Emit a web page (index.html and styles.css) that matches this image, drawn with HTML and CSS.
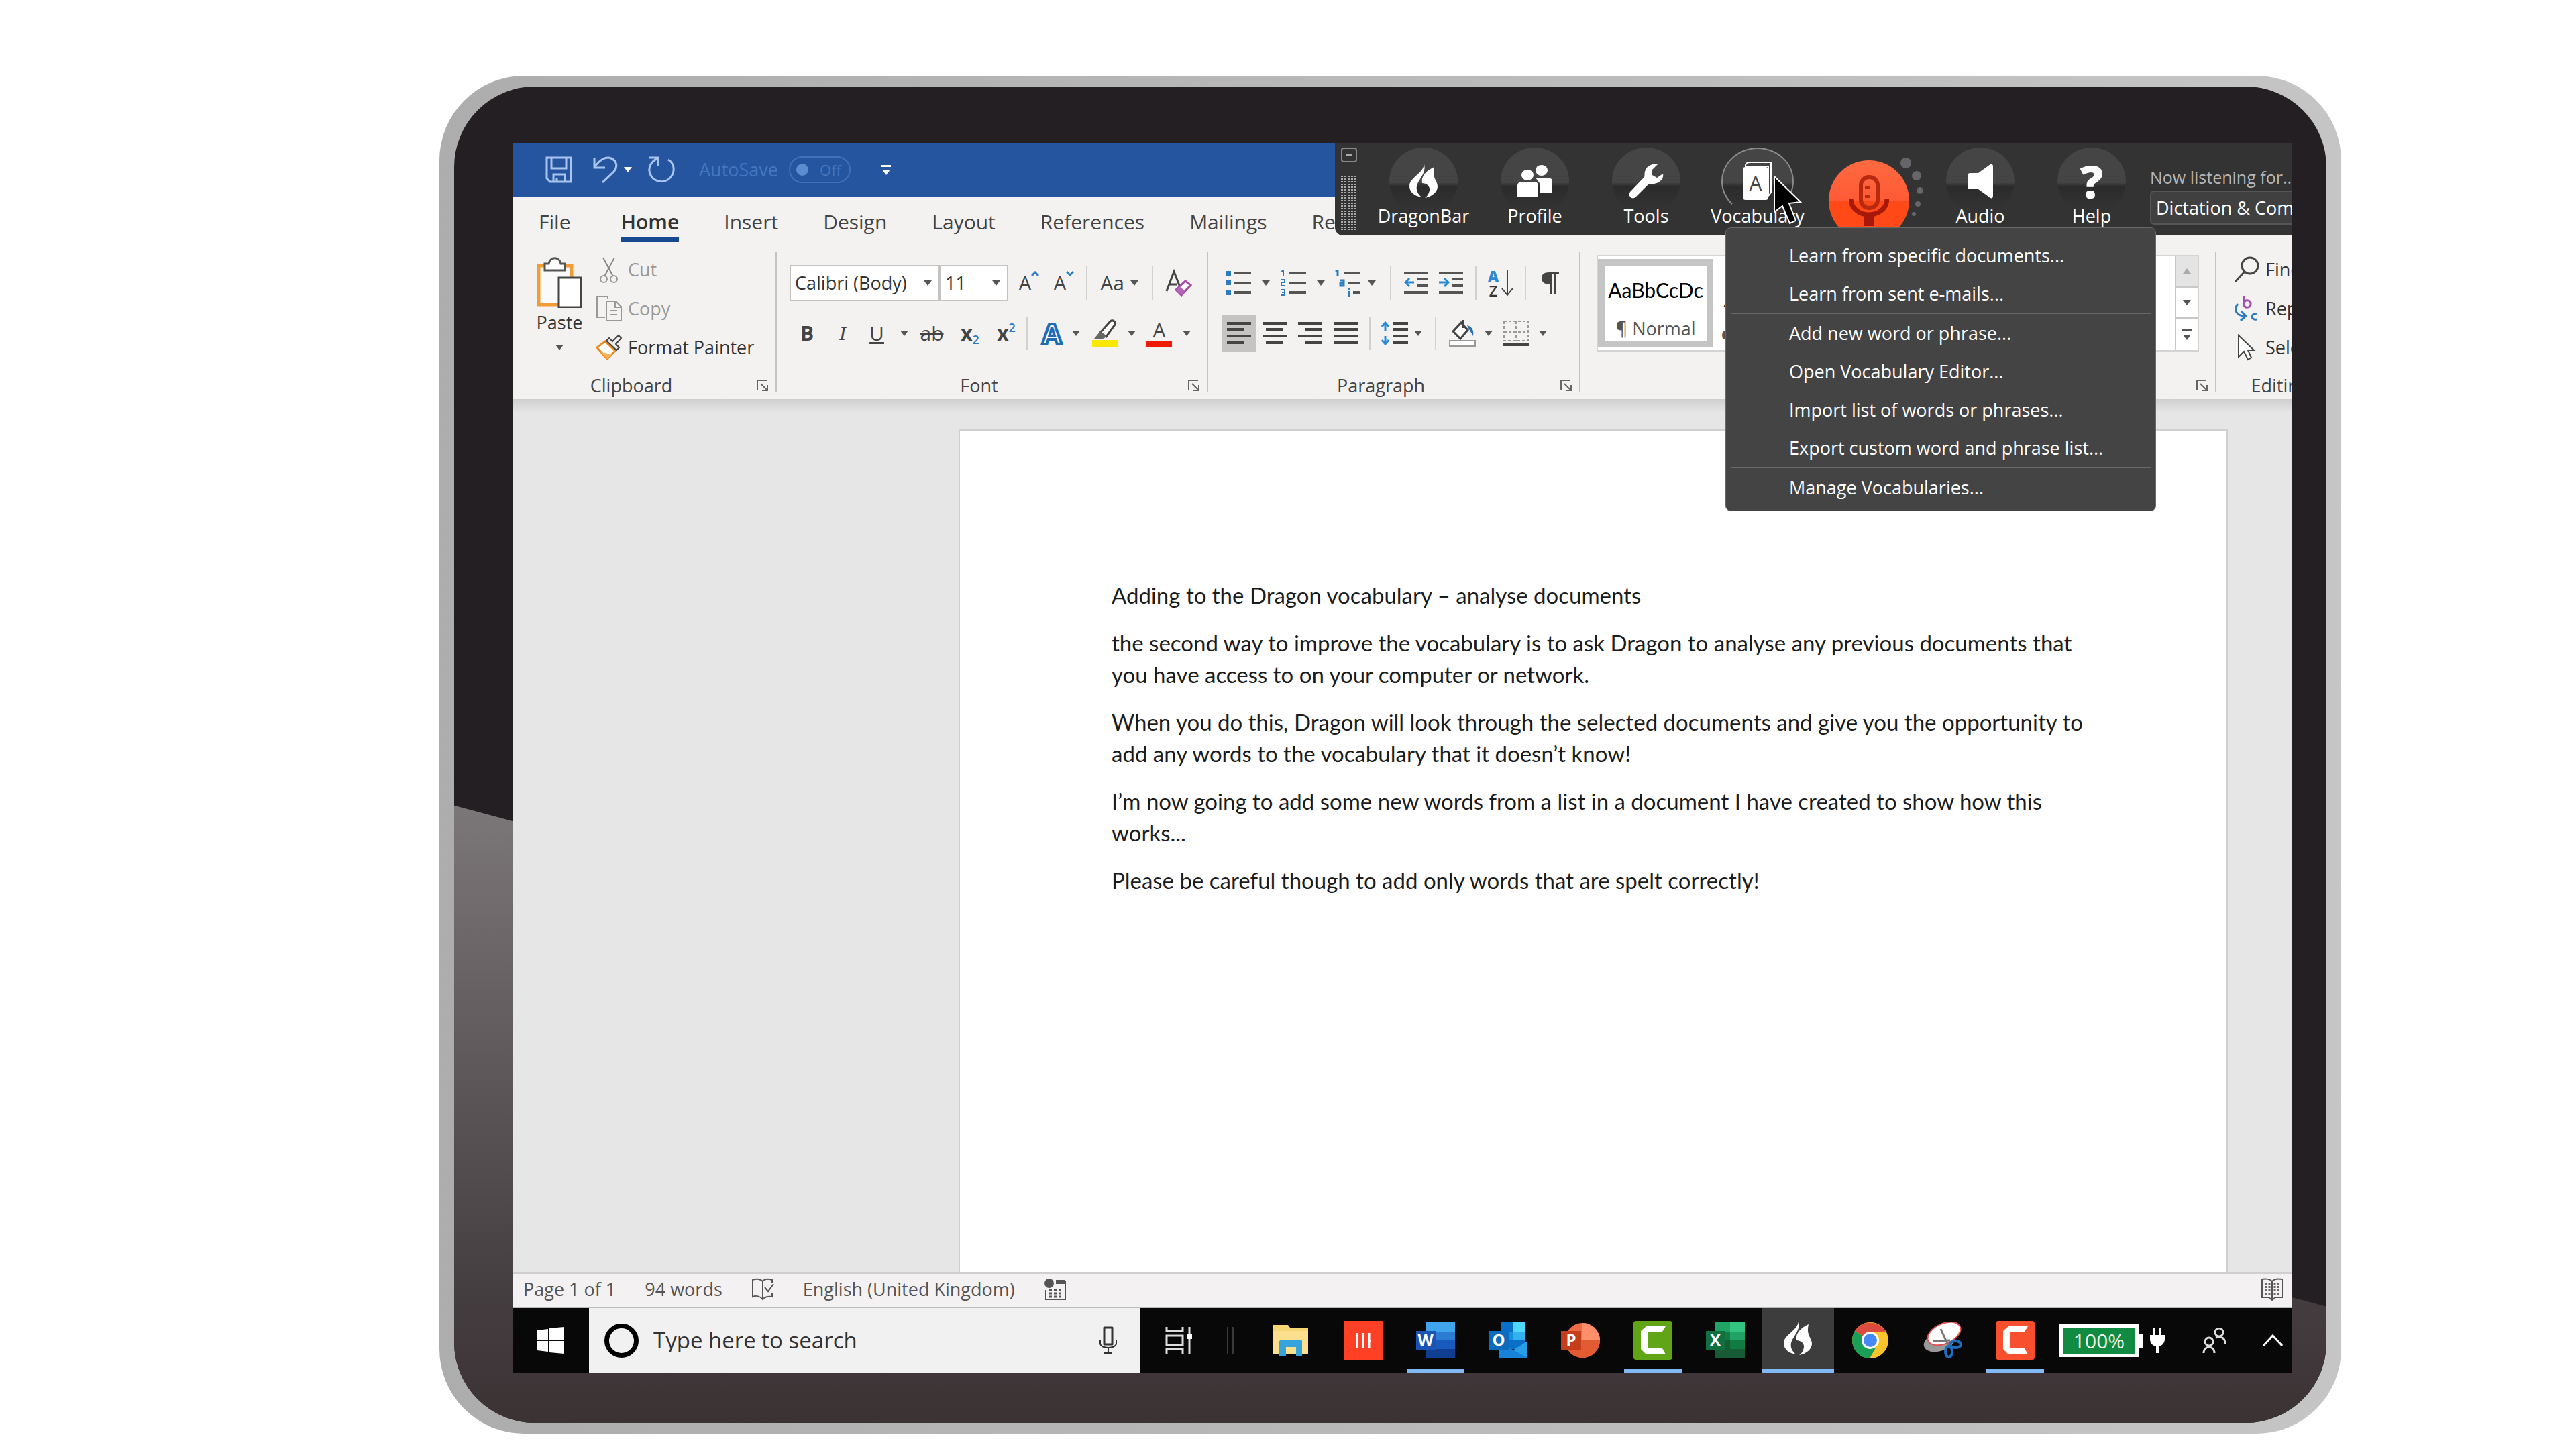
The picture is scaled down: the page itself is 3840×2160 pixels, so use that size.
FILE: index.html
```html
<!DOCTYPE html>
<html lang="en">
<head>
  <meta charset="UTF-8">
  <meta name="viewport" content="width=device-width, initial-scale=1.0">
  <title>Adding to the Dragon vocabulary</title>
  <link rel="stylesheet" href="styles.css">
</head>
<body>
  <svg class="sprite" width="0" height="0" aria-hidden="true">
    <symbol id="launcher" viewBox="0 0 18 18"><path d="M1 15V1H15M6 6L15 15M16 8V16H8" fill="none" stroke="#666" stroke-width="2"/></symbol>
    <symbol id="flame" viewBox="0 0 42 50"><path d="M22 0C20 14 0 20 0 32C0 42 8 47 18 49C11 43 9 36 12 29C16 20 25 12 22 0Z"/><path d="M37 4C26 9 17 17 19 28C26 28 31 33 30 39C29 44 26 48 23 50C34 48 42 41 42 33C42 24 33 21 37 4Z"/></symbol>
  </svg>

  <div class="tablet">
    <div class="bezel">
      <div class="screen">

        <!-- quick access bar -->
        <header class="titlebar">
          <button aria-label="Save"><svg width="40" height="40" viewBox="0 0 40 40"><path d="M2 2H38V38H7L2 33ZM9 2V18H31V2M12 38V27H29V38M17 38V33" /></svg></button>
          <button class="undo" aria-label="Undo"><svg width="38" height="40" viewBox="0 0 38 40"><path d="M2 2V17H18M2 17C10 4 20 0 27 3C36 7 37 16 31 23L14 39"/></svg><i class="caret white"></i></button>
          <button class="redo" aria-label="Redo"><svg width="40" height="40" viewBox="0 0 40 40"><path d="M2 2H15V15M15 3C3 8 0 18 3 26C8 41 30 42 37 26C40 17 37 9 30 5"/></svg></button>
          <label class="autosave">AutoSave
            <span class="toggle"><input type="checkbox">Off</span>
          </label>
          <button class="more" aria-label="Customise toolbar"><i class="bar"></i><i class="caret white"></i></button>
        </header>

        <section class="ribbon">
          <nav class="tabs">
            <a href="#" class="file">File</a>
            <a href="#" class="active">Home</a>
            <a href="#">Insert</a>
            <a href="#">Design</a>
            <a href="#">Layout</a>
            <a href="#">References</a>
            <a href="#">Mailings</a>
            <a href="#">Review</a>
          </nav>

          <div class="groups">
            <div class="group clipboard">
              <div class="clip-body">
                <button class="paste">
                  <svg width="68" height="76" viewBox="0 0 68 76"><path d="M3 13H52V71H3Z" fill="#fafafa" stroke="#f29c38" stroke-width="5"/><path d="M12 20V10H18C20 -1 34 -1 36 10H42V20Z" fill="#fff" stroke="#555" stroke-width="3"/><path d="M33 31H66V75H33Z" fill="#fff" stroke="#444" stroke-width="3"/></svg>
                  Paste
                  <i class="caret"></i>
                </button>
                <div class="clip-list">
                  <button class="off"><svg width="40" height="40" viewBox="0 0 40 40"><path d="M11 2L26 30M28 2L13 30" fill="none" stroke="#888" stroke-width="2"/><g fill="none" stroke="#999" stroke-width="2"><circle cx="12" cy="34" r="5"/><circle cx="27" cy="34" r="5"/></g></svg>Cut</button>
                  <button class="off"><svg width="40" height="40" viewBox="0 0 40 40"><path d="M14 33H2V2H18V6M16 9H30L38 17V38H16ZM29 9V18H38M21 23H32M21 29H32" fill="none" stroke="#999" stroke-width="2"/></svg>Copy</button>
                  <button><svg width="40" height="40" viewBox="0 0 40 40"><path d="M2 20L14 11L29 25L17 37Z" fill="#fff" stroke="#f08a24" stroke-width="3"/><path d="M8 27L17 37L24 30Z" fill="#fbb45c"/><path d="M16 10L20 6L25 11L34 2L38 6L30 15L35 20L31 24Z" fill="#eee" stroke="#444" stroke-width="2"/></svg>Format Painter</button>
                </div>
              </div>
              <footer><span>Clipboard</span><svg width="18" height="18"><use href="#launcher"/></svg></footer>
            </div>

            <div class="group font">
              <div class="tools font-top">
                <div class="pick"><select aria-label="Font"><option>Calibri (Body)</option></select><i class="caret"></i></div>
                <div class="pick"><select aria-label="Font size"><option>11</option></select><i class="caret"></i></div>
                <button class="glyph grow" aria-label="Grow font">A<svg width="12" height="8" viewBox="0 0 12 8"><path d="M1 7L6 2L11 7" fill="none" stroke="#2d7cc4" stroke-width="3"/></svg></button>
                <button class="glyph grow" aria-label="Shrink font">A<svg width="12" height="8" viewBox="0 0 12 8"><path d="M1 1L6 6L11 1" fill="none" stroke="#2d7cc4" stroke-width="3"/></svg></button>
                <i class="rule"></i>
                <button class="glyph">Aa</button>
                <i class="caret"></i>
                <i class="rule"></i>
                <button aria-label="Clear formatting"><svg width="40" height="42" viewBox="0 0 40 42"><path d="M2 33L13 4L22 27M6 23H18" fill="none" stroke="#444" stroke-width="3"/><path d="M16 31L30 18L38 24L24 39Z" fill="#fff" stroke="#a349a4" stroke-width="3"/><path d="M16 31L21 26L30 33L24 39Z" fill="#b565b6"/></svg></button>
              </div>
              <div class="tools font-low">
                <button class="glyph"><b>B</b></button>
                <button class="glyph serif"><em>I</em></button>
                <button class="glyph"><u>U</u></button>
                <i class="caret"></i>
                <button class="glyph"><s>ab</s></button>
                <button class="glyph"><b>x</b><sub>2</sub></button>
                <button class="glyph"><b>x</b><sup>2</sup></button>
                <i class="rule"></i>
                <button class="glyph outline">A</button>
                <i class="caret"></i>
                <button aria-label="Highlight"><svg width="40" height="42" viewBox="0 0 40 42"><path d="M13 20L28 3C32 0 37 4 35 8L22 26Z" fill="#fff" stroke="#444" stroke-width="3"/><path d="M13 18L23 26L17 29H4Z" fill="#666"/><path d="M1 31H39V42H1Z" fill="#fbe800"/></svg></button>
                <i class="caret"></i>
                <button class="glyph fontcolor">A</button>
                <i class="caret"></i>
              </div>
              <footer><span>Font</span><svg width="18" height="18"><use href="#launcher"/></svg></footer>
            </div>

            <div class="group para">
              <div class="tools para-top">
                <button aria-label="Bullets"><svg width="38" height="40" viewBox="0 0 38 40"><path d="M0 2H8V9H0ZM0 16H8V23H0ZM0 31H8V38H0Z" fill="#2b7cc0"/><path d="M13 5H38M13 20H38M13 34H38" stroke="#555" stroke-width="4"/></svg></button>
                <i class="caret"></i>
                <button aria-label="Numbering"><svg width="38" height="40" viewBox="0 0 38 40"><path d="M1 3L4 1V9M1 15H6V19H1V24H7M1 30H6V38H1M2 34H6" fill="none" stroke="#2b7cc0" stroke-width="2"/><path d="M13 5H38M13 20H38M13 34H38" stroke="#555" stroke-width="4"/></svg></button>
                <i class="caret"></i>
                <button aria-label="Multilevel list"><svg width="38" height="40" viewBox="0 0 38 40"><path d="M1 3L4 1V9M8 16H13V24H8V20H13M21 28V30M21 32V40" fill="none" stroke="#2b7cc0" stroke-width="3"/><path d="M13 5H38M20 20H38M27 34H38" stroke="#555" stroke-width="4"/></svg></button>
                <i class="caret"></i>
                <i class="rule"></i>
                <button aria-label="Decrease indent"><svg width="36" height="36" viewBox="0 0 36 36"><path d="M0 3H36M20 12H36M20 22H36M0 32H36" stroke="#555" stroke-width="4"/><path d="M1 17H15M8 11L2 17L8 23" fill="none" stroke="#2b8ad6" stroke-width="3"/></svg></button>
                <button aria-label="Increase indent"><svg width="36" height="36" viewBox="0 0 36 36"><path d="M0 3H36M20 12H36M20 22H36M0 32H36" stroke="#555" stroke-width="4"/><path d="M0 17H14M8 11L14 17L8 23" fill="none" stroke="#2b8ad6" stroke-width="3"/></svg></button>
                <i class="rule"></i>
                <button class="sort" aria-label="Sort"><span><b>A</b><br>Z</span><svg width="18" height="40" viewBox="0 0 18 40"><path d="M9 0V37M1 28L9 38L17 28" fill="none" stroke="#444" stroke-width="2"/></svg></button>
                <i class="rule"></i>
                <button aria-label="Show marks"><svg width="26" height="32" viewBox="0 0 26 32"><path d="M26 0V3H22V32H19V3H15V32H12V18C4 18 0 14 0 9C0 3 4 0 11 0Z" fill="#444"/></svg></button>
              </div>
              <div class="tools para-low">
                <button class="on" aria-label="Align left"><svg width="36" height="36" viewBox="0 0 36 36"><path d="M0 3H36M0 12H26M0 22H36M0 32H26" stroke="#444" stroke-width="4"/></svg></button>
                <button aria-label="Centre"><svg width="36" height="36" viewBox="0 0 36 36"><path d="M0 3H36M5 12H31M0 22H36M5 32H31" stroke="#444" stroke-width="4"/></svg></button>
                <button aria-label="Align right"><svg width="36" height="36" viewBox="0 0 36 36"><path d="M0 3H36M10 12H36M0 22H36M10 32H36" stroke="#444" stroke-width="4"/></svg></button>
                <button aria-label="Justify"><svg width="36" height="36" viewBox="0 0 36 36"><path d="M0 3H36M0 12H36M0 22H36M0 32H36" stroke="#444" stroke-width="4"/></svg></button>
                <i class="rule"></i>
                <button aria-label="Line spacing"><svg width="40" height="36" viewBox="0 0 40 36"><path d="M17 3H40M17 12H40M17 22H40M17 32H40" stroke="#444" stroke-width="4"/><path d="M6 2V14M1 8L6 2L11 8M6 22V34M1 28L6 34L11 28" fill="none" stroke="#2b8ad6" stroke-width="3"/></svg></button>
                <i class="caret"></i>
                <i class="rule"></i>
                <button aria-label="Shading"><svg width="40" height="40" viewBox="0 0 40 40"><path d="M18 4L6 17L17 28L28 15ZM21 0V12" fill="#fff" stroke="#444" stroke-width="3"/><path d="M27 8C36 10 37 18 36 24L30 14Z" fill="#2472b5"/><path d="M1 31H39V39H1Z" fill="#fff" stroke="#999" stroke-width="2"/></svg></button>
                <i class="caret"></i>
                <button aria-label="Borders"><svg width="38" height="38" viewBox="0 0 38 38"><path d="M1 1H37V30H1ZM19 1V30M1 17H37" fill="none" stroke="#999" stroke-width="2" stroke-dasharray="4 3"/><path d="M0 36H38" stroke="#444" stroke-width="4"/></svg></button>
                <i class="caret"></i>
              </div>
              <footer><span>Paragraph</span><svg width="18" height="18"><use href="#launcher"/></svg></footer>
            </div>

            <div class="group styles">
              <div class="gallery">
                <button class="tile selected"><span>AaBbCcDc</span>¶ Normal</button>
                <button class="tile"><span>AaBbCcDc</span>¶ No Spac...</button>
                <div class="scroller">
                  <button aria-label="Up" disabled><i class="caret up"></i></button>
                  <button aria-label="Down"><i class="caret"></i></button>
                  <button aria-label="More styles"><i class="bar"></i><i class="caret"></i></button>
                </div>
              </div>
              <footer><span></span><svg width="18" height="18"><use href="#launcher"/></svg></footer>
            </div>

            <div class="group editing">
              <div class="clip-list">
                <button><svg width="40" height="40" viewBox="0 0 40 40"><circle cx="25" cy="14" r="12" fill="none" stroke="#444" stroke-width="3"/><path d="M17 23L3 38" stroke="#444" stroke-width="3"/></svg>Find</button>
                <button><svg width="40" height="40" viewBox="0 0 40 40"><path d="M16 1V18M16 11C18 6 27 7 26 13C26 19 18 20 16 15" fill="none" stroke="#a04fb0" stroke-width="3"/><path d="M35 28C27 25 25 38 35 36M7 13C0 21 4 31 18 31M12 24L19 31L11 38" fill="none" stroke="#2b7cc0" stroke-width="3"/></svg>Replace</button>
                <button><svg width="40" height="40" viewBox="0 0 40 40"><path d="M8 2V34L16 26L22 38L27 35L22 24H31Z" fill="#fff" stroke="#444" stroke-width="2"/></svg>Select</button>
              </div>
              <footer><span>Editing</span></footer>
            </div>
          </div>
        </section>

        <main class="workspace">
          <article class="page">
            <p>Adding to the Dragon vocabulary – analyse documents</p>
            <p>the second way to improve the vocabulary is to ask Dragon to analyse any previous documents that<br>you have access to on your computer or network.</p>
            <p>When you do this, Dragon will look through the selected documents and give you the opportunity to<br>add any words to the vocabulary that it doesn’t know!</p>
            <p>I’m now going to add some new words from a list in a document I have created to show how this<br>works...</p>
            <p>Please be careful though to add only words that are spelt correctly!</p>
          </article>
        </main>

        <div class="status">
          <span>Page 1 of 1</span>
          <span>94 words</span>
          <svg width="34" height="34" viewBox="0 0 34 34"><path d="M17 32V5C13 1 6 1 2 3V28C7 26 13 27 17 32C20 28 24 27 31 28V22M17 5C20 1 25 1 31 3V8M20 14L25 20L33 9" fill="none" stroke="#555" stroke-width="2"/></svg>
          <span>English (United Kingdom)</span>
          <svg width="34" height="34" viewBox="0 0 34 34"><circle cx="8" cy="8" r="7" fill="#555"/><path d="M18 3H32V9H18Z" fill="#555"/><path d="M3 18V32H32V4" fill="none" stroke="#555" stroke-width="2"/><path d="M8 18H28M8 23H28M8 28H28" stroke="#555" stroke-width="3" stroke-dasharray="4 3"/></svg>
          <svg class="read" width="34" height="34" viewBox="0 0 34 34"><path d="M17 33V5C13 1 6 1 2 2V29H12L17 33L22 29H32V2C27 1 21 1 17 5" fill="none" stroke="#555" stroke-width="2"/><path d="M8 7V25M13 7V27M21 7V27M26 7V25" stroke="#666" stroke-width="3" stroke-dasharray="3 2"/></svg>
        </div>

        <nav class="taskbar">
          <button class="start" aria-label="Start"><svg width="40" height="40" viewBox="0 0 40 40"><path d="M0 5L16 3V19H0ZM18 2L40 0V19H18ZM0 21H16V37L0 35ZM18 21H40V40L18 38Z" fill="#fff"/></svg></button>
          <label class="search">
            <i class="cortana"></i>
            <input type="text" placeholder="Type here to search" aria-label="Search">
            <svg width="28" height="42" viewBox="0 0 28 42"><path d="M8 2H20V27H8Z" fill="none" stroke="#333" stroke-width="3" stroke-linejoin="round"/><path d="M2 20V26C3 34 25 34 26 26V20M14 33V40M8 40H20" fill="none" stroke="#333" stroke-width="2"/></svg>
          </label>
          <button class="taskview" aria-label="Task view"><svg width="40" height="40" viewBox="0 0 40 40"><path d="M2 0V6H26V0M2 13H26V27H2ZM2 40V33H26V40M36 0V40" fill="none" stroke="#ddd" stroke-width="3"/><path d="M32 10H40V18H32Z" fill="#fff"/></svg></button>
          <i class="grip"></i>
          <button class="app" aria-label="Files"><svg width="52" height="46" viewBox="0 0 52 46"><path d="M0 0H22L25 4H52V43H0Z" fill="#f7d774"/><path d="M0 9H52V43H0Z" fill="#fce08d"/><path d="M9 25C9 23 11 22 13 22H40C42 22 43 23 43 25V46H34V33H19V46H9Z" fill="#36a3dc"/></svg></button>
          <button class="app" aria-label="Mixer"><svg width="58" height="58" viewBox="0 0 58 58"><path d="M0 0H58V58H0Z" fill="#ff4025"/><path d="M20 18V40M29 18V40M38 18V40" stroke="#fff" stroke-width="3"/><path d="M18 26H22M27 34H31M36 30H40" stroke="#fff" stroke-width="3"/></svg></button>
          <button class="app open" aria-label="Word"><svg width="58" height="54" viewBox="0 0 58 54"><path d="M14 0H58V14H14Z" fill="#41a5ee"/><path d="M14 14H58V27H14Z" fill="#2b7cd3"/><path d="M14 27H58V40H14Z" fill="#185abd"/><path d="M14 40H58V53H14Z" fill="#103f91"/><path d="M0 13H29V41H0Z" fill="#1b54b4"/><text x="14" y="35">W</text></svg></button>
          <button class="app" aria-label="Outlook"><svg width="58" height="54" viewBox="0 0 58 54"><path d="M18 0H55V40H18Z" fill="#0a6fc8"/><path d="M37 0H55V14H37Z" fill="#50d9ff"/><path d="M18 14H55V27H18Z" fill="#1490df"/><path d="M37 14H55V27H37Z" fill="#32b1ee"/><path d="M16 30L36 42L58 28V53H16Z" fill="#28a0e8"/><path d="M16 30L58 53H16Z" fill="#1683d8"/><path d="M0 13H30V41H0Z" fill="#0a6cbd"/><text x="15" y="35">O</text></svg></button>
          <button class="app" aria-label="PowerPoint"><svg width="58" height="54" viewBox="0 0 58 54"><circle cx="32" cy="27" r="26" fill="#ed6c47"/><path d="M32 1A26 26 0 0 1 58 27H32Z" fill="#ff8f6b"/><path d="M6 27A26 26 0 0 0 58 27Z" fill="#e35b33"/><path d="M0 13H30V41H0Z" fill="#c43e1c"/><text x="15" y="35">P</text></svg></button>
          <button class="app open" aria-label="Recorder"><svg width="58" height="58" viewBox="0 0 58 58"><rect width="58" height="58" rx="4" fill="#5fa516"/><path d="M48 8L43 16H21V41H43L48 50H19L11 42V15L19 8Z" fill="#fff"/></svg></button>
          <button class="app" aria-label="Excel"><svg width="58" height="54" viewBox="0 0 58 54"><path d="M14 0H58V53H14Z" fill="#21a366"/><path d="M36 0H58V14H36Z" fill="#33c481"/><path d="M14 14H36V27H14Z" fill="#107c41"/><path d="M14 27H58V53H14Z" fill="#185c37"/><path d="M36 27H58V40H36Z" fill="#107c41"/><path d="M0 13H29V41H0Z" fill="#107040"/><text x="14" y="35">X</text></svg></button>
          <button class="app current" aria-label="Dragon"><svg width="42" height="54" fill="#fff"><use href="#flame"/></svg></button>
          <button class="app" aria-label="Chrome"><svg width="54" height="54" viewBox="0 0 54 54"><circle cx="27" cy="27" r="27" fill="#fcc42b"/><path d="M27 27L4 13A27 27 0 0 1 50 14H27Z" fill="#dc4b3e"/><path d="M4 13A27 27 0 0 0 26 54L37 35L27 27Z" fill="#1b9e58"/><circle cx="27" cy="27" r="13" fill="#fff"/><circle cx="27" cy="27" r="10" fill="#4688f4"/></svg></button>
          <button class="app" aria-label="Snipping tool"><svg width="58" height="54" viewBox="0 0 58 54"><ellipse cx="24" cy="29" rx="24" ry="14" fill="#999" transform="rotate(-18 24 29)"/><ellipse cx="31" cy="17" rx="26" ry="15" fill="#fff" stroke="#e05050" stroke-width="2" transform="rotate(-24 31 17)"/><path d="M26 10L37 34M14 28L40 27" stroke="#777" stroke-width="3"/><g fill="none" stroke="#1c6fc0" stroke-width="4"><ellipse cx="48" cy="33" rx="8" ry="5"/><ellipse cx="38" cy="44" rx="5" ry="8"/></g></svg></button>
          <button class="app open" aria-label="Capture"><svg width="58" height="58" viewBox="0 0 58 58"><rect width="58" height="58" rx="4" fill="#f8502e"/><path d="M48 8L43 16H21V41H43L48 50H19L11 42V15L19 8Z" fill="#fff"/></svg></button>
          <div class="tray">
            <span class="battery">100%</span>
            <svg width="22" height="38" viewBox="0 0 22 38"><path d="M5 0H8V11H14V0H17V11H22V17C22 23 18 27 13 28V38H9V28C4 27 0 23 0 17V11H5Z" fill="#fff"/></svg>
            <svg class="people" width="36" height="38" viewBox="0 0 36 38"><g fill="none" stroke="#ddd" stroke-width="3"><circle cx="25" cy="7" r="6"/><path d="M20 15C30 12 34 17 34 24"/><circle cx="10" cy="21" r="6"/><path d="M2 38C2 26 18 26 18 38"/></g></svg>
            <svg width="32" height="20" viewBox="0 0 32 20"><path d="M2 18L16 3L30 18" fill="none" stroke="#fff" stroke-width="3"/></svg>
          </div>
        </nav>

        <!-- DragonBar floats over the Word window -->
        <div class="dragonbar">
          <div class="handle"><button aria-label="Collapse"><i></i></button><i class="dotted"></i></div>
          <button class="item"><span class="disc"><svg width="42" height="50" fill="#fff"><use href="#flame"/></svg></span>DragonBar</button>
          <button class="item"><span class="disc"><svg width="52" height="48" viewBox="0 0 52 48" fill="#fff"><ellipse cx="36" cy="8" rx="9" ry="8"/><path d="M27 19H46C49 19 52 21 52 25V42H33V27Z"/><ellipse cx="15" cy="15" rx="9" ry="8"/><path d="M6 25H25C28 25 31 27 31 31V47H0V31C0 27 3 25 6 25Z"/></svg></span>Profile</button>
          <button class="item"><span class="disc"><svg width="52" height="52" viewBox="0 0 52 52" fill="#fff"><path d="M43 1C36 -1 26 3 24 12C23 16 24 18 23 20L2 42C-2 49 5 54 10 50L30 30C42 32 53 25 51 15L42 21L35 17L35 9Z"/></svg></span>Tools</button>
          <button class="item hot"><span class="disc"><svg width="44" height="58" viewBox="0 0 44 58"><path d="M4 5C5 2 7 1 10 1H42V46L38 51V7H4Z" fill="#444" stroke="#fff" stroke-width="2"/><rect x="0" y="8" width="38" height="49" rx="4" fill="#fff"/><text x="19" y="43">A</text></svg></span>Vocabulary</button>
          <button class="mic" aria-label="Microphone"><span><svg width="60" height="76" viewBox="0 0 60 76"><rect x="18" y="3" width="25" height="46" rx="12" fill="none" stroke="#b82a10" stroke-width="6"/><path d="M3 35C4 67 56 67 57 35" fill="none" stroke="#a81808" stroke-width="7"/><path d="M23 58H37V76H23Z" fill="#a81808"/><path d="M24 18H31M24 32H31" stroke="#b82a10" stroke-width="4"/></svg></span>
            <svg class="dots" width="34" height="90" viewBox="0 0 34 90" fill="#66666a"><circle cx="8" cy="10" r="8"/><circle cx="24" cy="29" r="7"/><circle cx="29" cy="51" r="5"/><circle cx="26" cy="71" r="4"/><circle cx="20" cy="86" r="3"/></svg></button>
          <button class="item"><span class="disc"><svg width="38" height="52" viewBox="0 0 38 52" fill="#fff"><path d="M34 1C36 0 38 1 38 4V48C38 51 36 52 34 51L16 38H4C1 38 0 36 0 34V18C0 16 1 14 4 14H16Z"/></svg></span>Audio</button>
          <button class="item"><span class="disc question">?</span>Help</button>
          <div class="listening">
            <label for="mode">Now listening for...</label>
            <select id="mode"><option>Dictation &amp; Commands</option></select>
          </div>

          <div class="menu">
            <button>Learn from specific documents...</button>
            <button>Learn from sent e-mails...</button>
            <hr>
            <button>Add new word or phrase...</button>
            <button>Open Vocabulary Editor...</button>
            <button>Import list of words or phrases...</button>
            <button>Export custom word and phrase list...</button>
            <hr>
            <button>Manage Vocabularies...</button>
          </div>
          <svg class="pointer" width="44" height="76" viewBox="0 0 44 76"><path d="M2 2V55L14 46L25 72L34 68L24 42L41 40Z" fill="#000" stroke="#fff" stroke-width="2"/></svg>
        </div>

      </div>
    </div>
  </div>
</body>
</html>
```
FILE: styles.css
```css
* {
  box-sizing: border-box;
}

body {
  margin: 0;
  min-height: 100vh;
  padding: 113px 350px 23px 655px;
  display: flex;
  background: #fff;
  color: #333;
  font: 27px/36px "Open Sans", "Noto Sans", sans-serif;
}

button, select, input {
  font: inherit;
  color: inherit;
  background: none;
  border: 0;
  padding: 0;
  margin: 0;
}
button {
  display: flex;
  align-items: center;
  justify-content: center;
}
svg {
  display: block;
  flex: none;
}
.sprite {
  position: absolute;
}

/* tablet */
.tablet {
  flex: 1;
  display: flex;
  padding: 16px 22px;
  border-radius: 126px;
  background: linear-gradient(to right, #adadad, #c5c5c5);
}
.bezel {
  flex: 1;
  display: flex;
  min-width: 0;
  position: relative;
  padding: 84px 51px 75px 87px;
  border-radius: 120px;
  overflow: hidden;
  background: #231f22;
}
.bezel::before { /* reflection */
  content: "";
  position: absolute;
  inset: 0;
  background: linear-gradient(#7b7678 54%, #443d3f 91%, #3b3234);
  clip-path: polygon(0 53.8%, 100% 91.3%, 100% 100%, 0 100%);
}
.screen {
  flex: 1;
  min-width: 0;
  position: relative;
  display: flex;
  flex-direction: column;
  overflow: hidden;
  background: #e6e6e6;
}

.caret {
  border: 6px solid transparent;
  border-top: 8px solid #555;
  border-bottom: 0;
}
.caret.white {
  border-top-color: #fff;
}
.caret.up {
  border-top: 0;
  border-bottom: 8px solid #aaa;
}
.bar {
  width: 14px;
  height: 3px;
  background: #555;
}

/* title bar */
.titlebar {
  height: 80px;
  padding-left: 49px;
  display: flex;
  align-items: center;
  background: #26559f;
  color: #4576bd;
}
.titlebar path {
  fill: none;
  stroke: #a9c4ee;
  stroke-width: 3px;
}
.undo {
  margin-left: 31px;
  gap: 8px;
}
.redo {
  margin-left: 24px;
}
.autosave {
  display: flex;
  align-items: center;
  gap: 16px;
  margin-left: 36px;
}
.toggle {
  display: flex;
  align-items: center;
  justify-content: space-between;
  width: 92px;
  height: 40px;
  padding: 0 12px 0 9px;
  border: 2px solid #4070b5;
  border-radius: 20px;
  font-size: 22px;
}
.toggle input {
  appearance: none;
  width: 18px;
  height: 18px;
  border-radius: 50%;
  background: #5d8bd0;
}
.more {
  flex-direction: column;
  gap: 4px;
  margin-left: 46px;
}
.more .bar {
  background: #fff;
}

/* ribbon */
.ribbon {
  background: #f3f2f1;
  height: 302px;
  flex: none;
}
.tabs {
  display: flex;
  gap: 67px;
  height: 82px;
  padding: 18px 0 0 39px;
}
.tabs a {
  height: 50px;
  font-size: 30px;
  line-height: 40px;
  color: #444;
  text-decoration: none;
}
.tabs .file {
  margin-right: 8px;
}
.tabs .active {
  font-weight: 600;
  color: #333;
  border-bottom: 8px solid #184a91;
}
.groups {
  display: flex;
  height: 210px;
}
.group {
  flex: none;
  display: flex;
  flex-direction: column;
  border-right: 2px solid #c4c3c2;
}
.group footer {
  display: flex;
  align-items: center;
  height: 20px;
  margin-top: auto;
  color: #444;
}
.group footer span {
  flex: 1;
  text-align: center;
}
.group footer svg {
  margin: 0 10px;
}

.clipboard {
  width: 394px;
}
.clip-body {
  display: flex;
  gap: 16px;
  padding-left: 32px;
}
.paste {
  flex-direction: column;
  justify-content: flex-start;
  width: 76px;
  padding-top: 8px;
}
.paste svg {
  margin-bottom: 4px;
}
.paste .caret {
  margin-top: 15px;
}
.clip-list {
  display: flex;
  flex-direction: column;
  gap: 20px;
  padding-top: 8px;
}
.clip-list button {
  justify-content: flex-start;
  gap: 8px;
  height: 38px;
}
.clip-list .off {
  color: #999;
}

.font {
  width: 643px;
}
.para {
  width: 555px;
}
.tools {
  display: grid;
  align-items: center;
  justify-items: center;
  height: 54px;
  margin: 20px 0 0 19px;
}
.tools + .tools {
  margin-top: 21px;
}
.font-top {
  grid-template-columns: 224px 102px 62px 42px 26px 50px 16px 38px 40px;
}
.font-low {
  grid-template-columns: 52px 54px 48px 34px 48px 66px 42px 20px 54px 18px 68px 12px 70px 12px;
}
.para-top {
  grid-template-columns: 52px 30px 52px 30px 50px 22px 34px 42px 62px 12px 62px 12px 62px;
}
.para-low {
  grid-template-columns: 54px 52px 54px 52px 20px 54px 16px 36px 44px 34px 48px 32px;
}
.rule {
  width: 2px;
  height: 50px;
  background: #d2d1d0;
}
.pick {
  display: flex;
  align-items: center;
  width: 100%;
  height: 54px;
  padding-right: 10px;
  border: 2px solid #c3c2c1;
  background: #fff;
}
.pick select {
  appearance: none;
  flex: 1;
  min-width: 0;
  padding-left: 6px;
}
.glyph {
  color: #444;
  font-size: 30px;
}
.glyph sub, .glyph sup {
  color: #2b7cc0;
  font-size: 18px;
  font-weight: 600;
  line-height: 18px;
}
.glyph sub {
  align-self: flex-end;
}
.glyph sup {
  align-self: flex-start;
}
.grow {
  align-items: flex-start;
}
.serif {
  font-family: "Liberation Serif", serif;
}
.outline {
  color: #fff;
  font-size: 42px;
  font-weight: 700;
  -webkit-text-stroke: 4px #1f6cb5;
}
.fontcolor {
  width: 38px;
  height: 42px;
  line-height: 30px;
  border-bottom: 10px solid #ee1c00;
}
.on {
  width: 52px;
  height: 54px;
  background: #c5c4c3;
}
.sort {
  gap: 4px;
}
.sort span {
  font-size: 22px;
  line-height: 22px;
  font-weight: 600;
}
.sort b {
  color: #2b8ad6;
}

.styles {
  flex: 1;
  min-width: 0;
}
.gallery {
  display: flex;
  height: 144px;
  margin: 5px 24px 0;
  border: 2px solid #d4d4d4;
  background: #fff;
}
.tile {
  flex-direction: column;
  justify-content: flex-end;
  gap: 22px;
  width: 172px;
  padding: 0 4px;
  overflow: hidden;
  color: #555;
  white-space: nowrap;
}
.tile span {
  width: 100%;
  overflow: hidden;
  color: #000;
  font: 30px/36px Lato, sans-serif;
}
.tile.selected {
  margin: 4px 0;
  border: 10px solid #c5c5c5;
}
.scroller {
  display: grid;
  grid-template-rows: 1fr 1fr 1fr;
  width: 34px;
  margin-left: auto;
  border-left: 2px solid #c8c8c8;
}
.scroller button {
  flex-direction: column;
  gap: 6px;
  border-bottom: 2px solid #c8c8c8;
}
.scroller button:disabled {
  background: #e4e4e4;
}
.scroller button:last-child {
  border-bottom: 0;
}
.editing {
  width: 164px;
  margin-right: -51px;
  padding-left: 25px;
  border: 0;
}

/* document */
.workspace {
  flex: 1;
  display: flex;
  padding: 45px 96px 0 665px;
  background: linear-gradient(#cfcfcf, #e6e6e6 20px);
}
.page {
  flex: 1;
  padding: 222px 0 0 226px;
  border: 2px solid #d0d0d0;
  border-bottom: 0;
  background: #fff;
  color: #1c1c1c;
  font: 33px/47px Lato, sans-serif;
  white-space: nowrap;
}
.page p {
  margin: 0 0 24px;
}

.status {
  display: flex;
  align-items: center;
  gap: 43px;
  height: 54px;
  padding: 0 13px 4px 16px;
  border-top: 3px solid #d0cfcf;
  border-bottom: 2px solid #bbb;
  background: #f3f1f2;
  color: #555;
}
.read {
  margin-left: auto;
}

/* taskbar */
.taskbar {
  display: flex;
  align-items: center;
  height: 96px;
  background: #080808;
}
.taskbar button {
  height: 100%;
}
.start, .taskview {
  width: 114px;
}
.search {
  flex: 1;
  align-self: stretch;
  display: flex;
  align-items: center;
  padding: 0 34px 0 23px;
  background: #f2f1f2;
}
.cortana {
  width: 51px;
  height: 51px;
  border: 7px solid #000;
  border-radius: 50%;
}
.search input {
  flex: 1;
  min-width: 0;
  padding-left: 22px;
  font-size: 33px;
}
.search input::placeholder {
  color: #333;
}
.grip {
  width: 10px;
  height: 40px;
  margin: 0 31px 0 15px;
  border: 2px solid #3a3a3a;
  border-width: 0 2px;
}
.app {
  width: 108px;
}
.app text {
  fill: #fff;
  font-size: 24px;
  font-weight: 700;
  text-anchor: middle;
}
.app.open {
  background: linear-gradient(#82b9f5, #82b9f5) center bottom / 86px 6px no-repeat;
}
.app.current {
  background: #3d3d3e;
  border-bottom: 6px solid #82b9f5;
}
.tray {
  display: flex;
  align-items: center;
  padding: 0 13px 0 12px;
}
.battery {
  position: relative;
  width: 118px;
  height: 49px;
  margin-right: 17px;
  border: 5px solid #fff;
  background: #128b42;
  color: #e8f5e8;
  font-size: 30px;
  line-height: 39px;
  text-align: center;
}
.battery::after {
  content: "";
  position: absolute;
  top: 9px;
  right: -11px;
  width: 6px;
  height: 21px;
  background: #fff;
}
.people {
  margin: 0 53px 0 56px;
}

/* DragonBar */
.dragonbar {
  position: absolute;
  top: 0;
  right: 0;
  display: flex;
  align-items: flex-start;
  width: 1427px;
  height: 138px;
  border-bottom-left-radius: 12px;
  background: #333;
  color: #fff;
}
.handle {
  display: flex;
  flex-direction: column;
  gap: 18px;
  width: 49px;
  flex: none;
  padding: 7px 0 0 9px;
}
.handle button {
  width: 24px;
  height: 22px;
  border: 2px solid #888;
  border-radius: 4px;
}
.handle button i {
  width: 8px;
  height: 4px;
  background: #aaa;
}
.dotted {
  width: 25px;
  height: 83px;
  background: repeating-linear-gradient(#333 0 2px, transparent 2px 4px), repeating-linear-gradient(to right, #aaa 0 3px, #333 3px 5px);
}
.item {
  flex: none;
  flex-direction: column;
  width: 166px;
  padding-top: 7px;
}
.disc {
  display: flex;
  align-items: center;
  justify-content: center;
  width: 102px;
  height: 100px;
  margin-bottom: -16px;
  border-radius: 50%;
  background: linear-gradient(#454546 52%, #2b2b2b 58%, #333 90%);
}
.hot .disc {
  width: 108px;
  border: 2px solid #8a8a8a;
  border-bottom-color: transparent;
}
.hot text {
  fill: #444;
  font-size: 30px;
  text-anchor: middle;
}
.question {
  font-size: 68px;
  font-weight: 800;
}
.mic {
  flex: none;
  width: 166px;
  padding-top: 26px;
  position: relative;
}
.mic span {
  display: flex;
  align-items: center;
  justify-content: center;
  width: 120px;
  height: 120px;
  border-radius: 50%;
  background: linear-gradient(#ff6a40, #ff5a35 50%, #ff4a18 51%);
}
.dots {
  position: absolute;
  top: 20px;
  right: 2px;
}
.listening {
  flex: none;
  display: flex;
  flex-direction: column;
  gap: 2px;
  margin-left: 4px;
  padding-top: 33px;
  color: #b5b5b5;
  font-size: 25px;
  white-space: nowrap;
}
.listening select {
  appearance: none;
  width: 320px;
  height: 51px;
  padding-left: 7px;
  border: 2px solid #555;
  border-radius: 6px;
  background: #404040;
  color: #fff;
  font-size: 27px;
}

.menu {
  position: absolute;
  top: 126px;
  left: 582px;
  width: 642px;
  padding: 12px 7px 6px;
  border: 1px solid #686868;
  border-radius: 8px;
  background: #444;
}
.menu button {
  width: 100%;
  height: 57px;
  padding-left: 87px;
  justify-content: flex-start;
}
.menu hr {
  height: 2px;
  margin: 0;
  border: 0;
  background: #686868;
}
.pointer {
  position: absolute;
  top: 48px;
  left: 653px;
}
```
